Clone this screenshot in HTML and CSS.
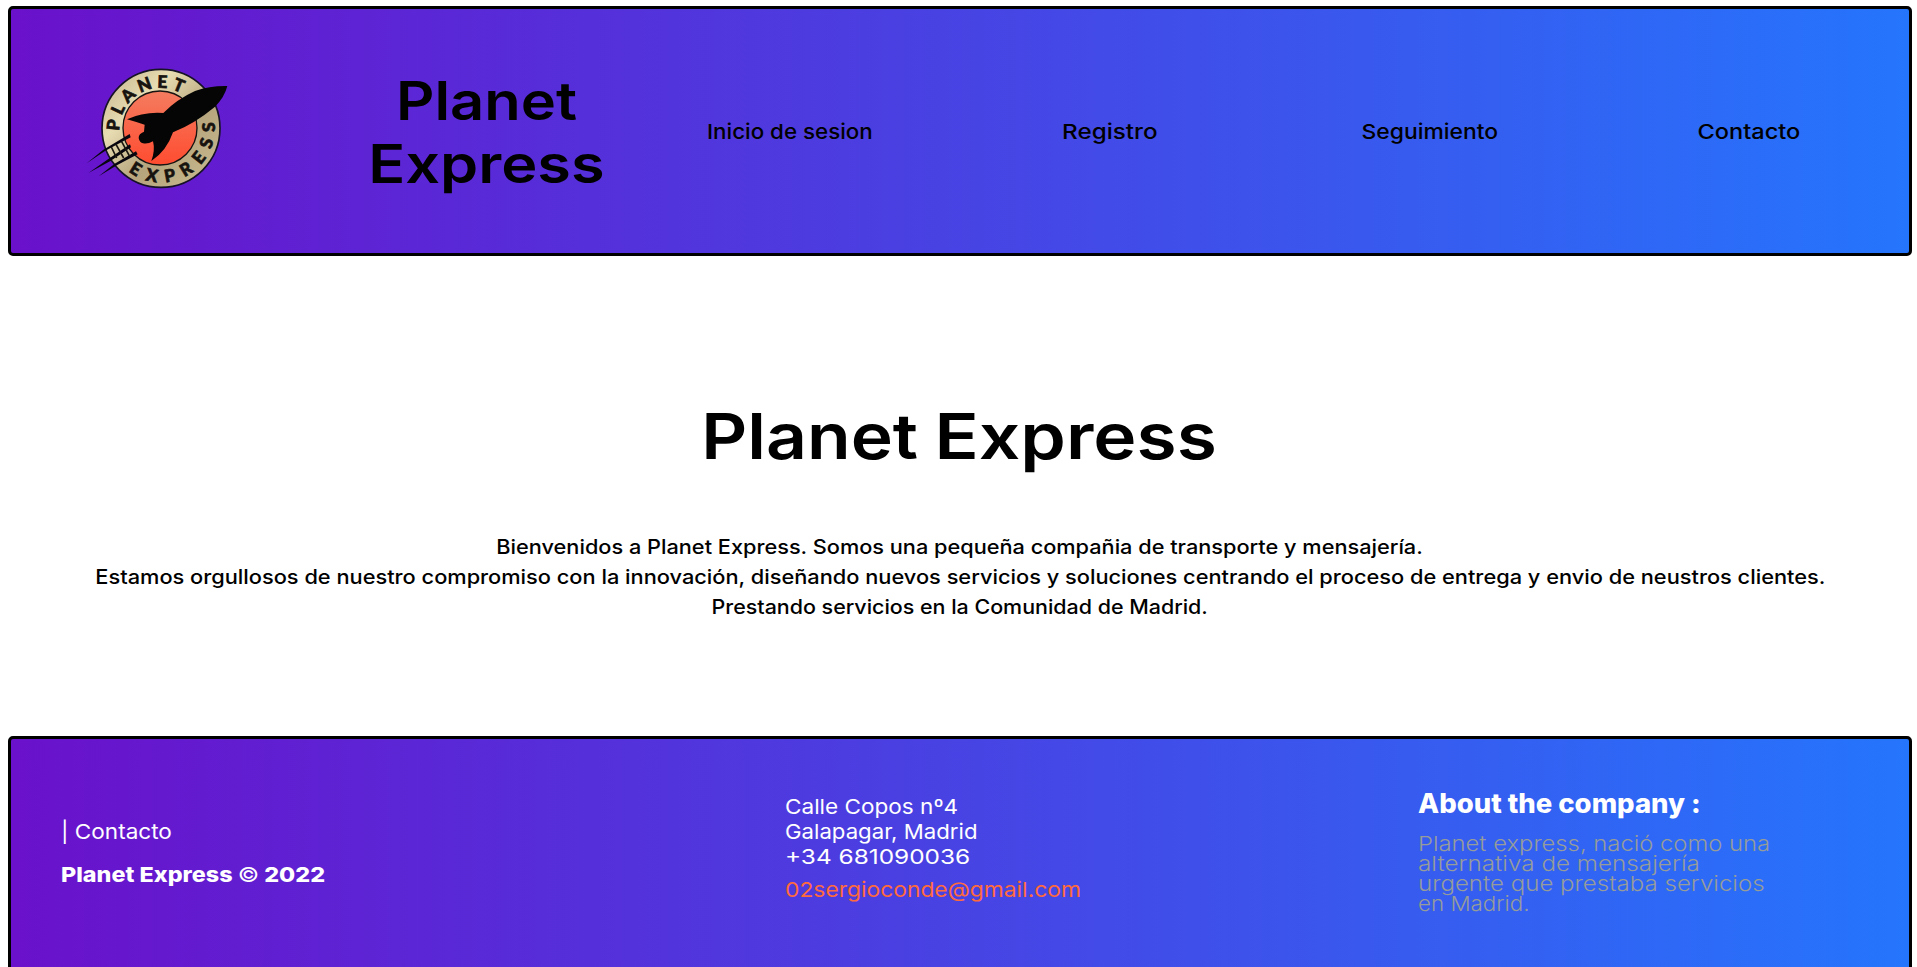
FILE: index.html
```html
<!DOCTYPE html>
<html lang="es">
<head>
<meta charset="utf-8">
<title>Planet Express</title>
<link rel="stylesheet" href="styles.css">
</head>
<body>
<header class="header">
  <a class="logo">
    <svg class="logo-img" viewBox="0 0 480 435" role="img">
      <defs>
        <linearGradient id="ring" x1="0" y1="0" x2="1" y2="1">
          <stop offset="0" stop-color="#c0b08a"/><stop offset=".3" stop-color="#e8dcb2"/><stop offset=".6" stop-color="#b5a47c"/><stop offset="1" stop-color="#cdbd92"/>
        </linearGradient>
        <linearGradient id="disc" x1="0" y1="0" x2="0" y2="1">
          <stop offset="0" stop-color="#f47c60"/><stop offset="1" stop-color="#ff4c30"/>
        </linearGradient>
        <path id="arcTop" d="M118 228 A125 125 0 0 1 368 220"/>
        <path id="arcBottom" d="M145 349 A162 162 0 0 0 405 220 A162 162 0 0 0 390 152"/>
      </defs>
      <circle cx="243" cy="220" r="177" fill="url(#ring)" stroke="#171326" stroke-width="5"/>
      <circle cx="240" cy="219" r="111" fill="url(#disc)" stroke="#171310" stroke-width="4"/>
      <text class="logo-text"><textPath href="#arcTop" textLength="264">PLANET</textPath></text>
      <text class="logo-text"><textPath href="#arcBottom" textLength="378">EXPRESS</textPath></text>
      <path fill="#050505" d="M442 93 Q390 92 345 108 Q290 133 250 174 Q190 170 141 193 Q172 202 194 209 L192 230 Q176 236 176 249 Q179 264 189 265 Q203 268 219 259 Q226 285 214 318 Q260 288 279 232 Q345 205 405 155 Q434 126 442 93Z"/>
      <path fill="#08060f" d="M149 237 L152 247 L76 287 L20 325 L70 284Z M150 268 L153 277 L90 319 L25 354 L84 313Z M168 289 L173 298 L112 330 L56 364 L104 326Z"/>
      <path stroke="#1b1710" stroke-width="5" d="M94 276L110 309M108 268L131 309M125 260L149 304"/>
    </svg>
  </a>
  <h2 class="brand"><span class="brand-a">Planet</span><br><span class="brand-b">Express</span></h2>
  <nav class="nav">
    <a class="nav-inicio">Inicio de sesion</a>
    <a class="nav-registro">Registro</a>
    <a class="nav-seguimiento">Seguimiento</a>
    <a class="nav-contacto">Contacto</a>
  </nav>
</header>
<main class="main">
  <h1 class="title"><span class="title-a">Planet</span> <span class="title-b">Express</span></h1>
  <p class="intro">
    <span class="intro-a">Bienvenidos a Planet Express. Somos una pequeña compañia de transporte y mensajería.</span><br>
    <span class="intro-b">Estamos orgullosos de nuestro compromiso con la innovación, diseñando nuevos servicios y soluciones centrando el proceso de entrega y envio de neustros clientes.</span><br>
    <span class="intro-c">Prestando servicios en la Comunidad de Madrid.</span>
  </p>
</main>
<footer class="footer">
  <div class="foot-left">
    <p class="foot-link">| Contacto</p>
    <p class="copyright">Planet Express <span class="copy">©</span> 2022</p>
  </div>
  <div class="foot-center">
    <p class="street">Calle Copos nº4</p>
    <p class="city">Galapagar, Madrid</p>
    <p class="phone">+34 681090036</p>
    <p class="mail">02sergioconde@gmail.com</p>
  </div>
  <div class="foot-right">
    <h3 class="about-title">About the company :</h3>
    <p class="about"><span class="about-a">Planet express, nació como una</span><br><span class="about-b">alternativa de mensajería</span><br><span class="about-c">urgente que prestaba servicios</span><br><span class="about-d">en Madrid.</span></p>
  </div>
</footer>
</body>
</html>
```
FILE: styles.css
```css
* { box-sizing: border-box; }
html { overflow: hidden; }
body { margin: 6px 5px 0 8px; background: #fff; color: #000; font-family: Inter, "DejaVu Sans", sans-serif; }
h1, h2, h3, p { margin: 0; }

.header, .footer {
  height: 250px;
  border: 3px solid #000;
  border-radius: 5px;
  background: linear-gradient(to right, #6a11cb 0%, #2575fc 100%);
  display: grid;
}
.header { grid-template-columns: 333px 286px 1fr; align-items: center; padding-top: 1px; }
.logo { padding-left: 69px; margin-top: -9px; }
.logo-img { display: block; width: 160px; height: 145px; }
.logo-text { font: 900 52px Lato, sans-serif; fill: #17130f; stroke: #17130f; stroke-width: 2px; }

/* Wide display lettering: each line is stretched horizontally */
.brand span, .intro > span, .about span { display: inline-block; }

.brand { font-size: 53px; line-height: 63px; font-weight: 600; text-align: center; white-space: nowrap; padding: 2px 1px 0 0; }
.brand-a { transform: scaleX(1.125); }
.brand-b { transform: scaleX(1.155); }

.nav { display: grid; grid-template-columns: repeat(4, 1fr); text-align: center; font-size: 20.5px; font-weight: 500; }
.nav-inicio { transform: scaleX(1.09); }
.nav-registro { transform: scaleX(1.182); }
.nav-seguimiento { transform: scaleX(1.116); }
.nav-contacto { transform: scaleX(1.15); }

.main { height: 480px; padding-top: 140px; text-align: center; }
.title { display: flex; justify-content: center; gap: 49px; padding-right: 8px; font-size: 63px; line-height: 80px; font-weight: 600; white-space: nowrap; }
.title-a { transform: scaleX(1.133); }
.title-b { transform: scaleX(1.16); }
.intro { margin-top: 56px; font-size: 20px; line-height: 30px; font-weight: 500; white-space: nowrap; }
.intro-a { transform: scaleX(1.086); }
.intro-b { transform: scaleX(1.089); }
.intro-c { transform: scaleX(1.071); }

.footer { grid-template-columns: 725px 633px 1fr; padding-left: 49px; color: #fff; font-size: 20.5px; line-height: 25px; white-space: nowrap; }
.footer p, .footer h3, .about span { transform-origin: left center; width: max-content; }
.foot-left { padding: 80px 0 0 1px; }
.foot-link { transform: scaleX(1.1); }
.copyright { margin-top: 18px; font-weight: 800; transform: scaleX(1.14); }
.copy { font-weight: 400; }
.foot-center { padding-top: 55px; }
.street { transform: scaleX(1.1); }
.city { transform: scaleX(1.082); }
.phone { transform: scaleX(1.19); }
.mail { margin-top: 8px; transform: scaleX(1.114); color: #ff6a3c; }
.foot-right { padding-top: 50px; }
.about-title { font-size: 27px; line-height: 30px; font-weight: 800; transform: scaleX(1.018); }
.about { margin-top: 15px; line-height: 20px; font-weight: 300; color: #969c9a; }
.about span { line-height: 20px; vertical-align: top; }
.about-a { transform: scaleX(1.161); }
.about-b { transform: scaleX(1.183); }
.about-c { transform: scaleX(1.174); }
.about-d { transform: scaleX(1.09); }
```
